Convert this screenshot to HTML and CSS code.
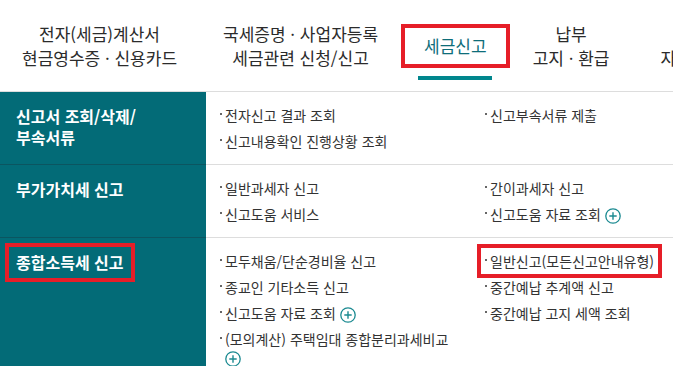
FILE: index.html
```html
<!DOCTYPE html>
<html lang="ko">
<head>
<meta charset="utf-8">
<title>세금신고</title>
<link rel="stylesheet" href="styles.css">
</head>
<body>

<div class="gnb">
   <div class="tab">전자(세금)계산서<br>현금영수증 · 신용카드</div>
   <div class="tab">국세증명 · 사업자등록<br>세금관련 신청/신고</div>
   <div class="tab on"><span class="mark">세금신고</span></div>
   <div class="tab">납부<br>고지 · 환급</div>
   <div class="tab">지급명세서<br>자료제출 · 공익법인</div>
</div>

<div class="menu">
   <div class="row">
      <div class="cat">신고서 조회/삭제/<br>부속서류</div>
      <ul class="links">
         <li>전자신고 결과 조회</li>
         <li>신고부속서류 제출</li>
         <li>신고내용확인 진행상황 조회</li>
      </ul>
   </div>
   <div class="row">
      <div class="cat">부가가치세 신고</div>
      <ul class="links">
         <li>일반과세자 신고</li>
         <li>간이과세자 신고</li>
         <li>신고도움 서비스</li>
         <li>신고도움 자료 조회 <span class="plus"><svg width="16" height="16" viewBox="0 0 16 16"><circle cx="8" cy="8" r="7.2" fill="none" stroke="#1b8a91" stroke-width="1.3"/><path d="M8 4.3v7.4M4.3 8h7.4" stroke="#1b8a91" stroke-width="1.4"/></svg></span></li>
      </ul>
   </div>
   <div class="row last">
      <div class="cat"><span class="mark">종합소득세 신고</span></div>
      <ul class="links">
         <li>모두채움/단순경비율 신고</li>
         <li class="mark">일반신고(모든신고안내유형)</li>
         <li>종교인 기타소득 신고</li>
         <li>중간예납 추계액 신고</li>
         <li>신고도움 자료 조회 <span class="plus"><svg width="16" height="16" viewBox="0 0 16 16"><circle cx="8" cy="8" r="7.2" fill="none" stroke="#1b8a91" stroke-width="1.3"/><path d="M8 4.3v7.4M4.3 8h7.4" stroke="#1b8a91" stroke-width="1.4"/></svg></span></li>
         <li>중간예납 고지 세액 조회</li>
         <li>(모의계산) 주택임대 종합분리과세비교<br><span class="plus"><svg width="16" height="16" viewBox="0 0 16 16"><circle cx="8" cy="8" r="7.2" fill="none" stroke="#1b8a91" stroke-width="1.3"/><path d="M8 4.3v7.4M4.3 8h7.4" stroke="#1b8a91" stroke-width="1.4"/></svg></span></li>
      </ul>
   </div>
</div>

</body>
</html>
```

FILE: styles.css
```css
BODY {
   margin : 0;
   background : #fff;
   color : #333;
   font-family : "Noto Sans CJK KR", "Noto Sans", sans-serif;
   overflow : hidden;
}

/* top tabs */

.gnb {
   display : flex;
   align-items : center;
   height : 91px;
   border-bottom : 1px solid #ddd;
   white-space : nowrap;
   overflow : hidden;
}

.tab {
   position : relative;
   flex : none;
   padding : 0 23px;
   font-size : 17px;
   line-height : 24px;
   text-align : center;
   color : #2b2b2b;
}

.tab:first-child {
   margin-left : -1px;
}

.tab:last-child {
   margin-left : 5px;
}

.tab.on {
   color : #0e6d79;
}

.tab.on:after {
   content : "";
   position : absolute;
   left : 17px;
   right : 18px;
   top : 42px;
   height : 4px;
   background : #00868d;
}

/* red annotation boxes */

.mark {
   outline : 4px solid #e61e28;
}

.gnb .mark {
   display : inline-block;
   padding : 6px 19px;
   margin : -6px -19px;
}

/* menu rows */

.row {
   display : grid;
   grid-template-columns : 206px 1fr;
}

.cat {
   background : #036b77;
   color : #fff;
   font-size : 16px;
   font-weight : bold;
   line-height : 21px;
   padding : 14px 16px 0;
   border-bottom : 1px solid #0b5560;
}

.cat .mark {
   display : inline-block;
   padding : 5px 7px;
   margin : -5px -7px;
}

.links {
   display : grid;
   grid-template-columns : 265px 1fr;
   align-content : start;
   margin : 0;
   padding : 10px 0 10px 14px;
   list-style : none;
   border-bottom : 1px solid #ddd;
   min-height : 51px;
}

.links LI {
   font-size : 14px;
   line-height : 26px;
   white-space : nowrap;
}

.links LI:before {
   content : "";
   display : inline-block;
   width : 2px;
   height : 2px;
   background : #666;
   vertical-align : 6px;
   margin-right : 3px;
}

.links LI.mark {
   justify-self : start;
   padding : 0 4px;
   margin : 0 -4px;
}

.plus {
   display : inline-block;
   vertical-align : -4px;
   line-height : 0;
}

.row.last .links LI:last-child {
   line-height : 18px;
   padding-top : 4px;
}

.row.last .links LI:last-child .plus {
   margin-left : 5px;
}

.row.last .cat,
.row.last .links {
   border-bottom : 0;
   min-height : 140px;
}
```
